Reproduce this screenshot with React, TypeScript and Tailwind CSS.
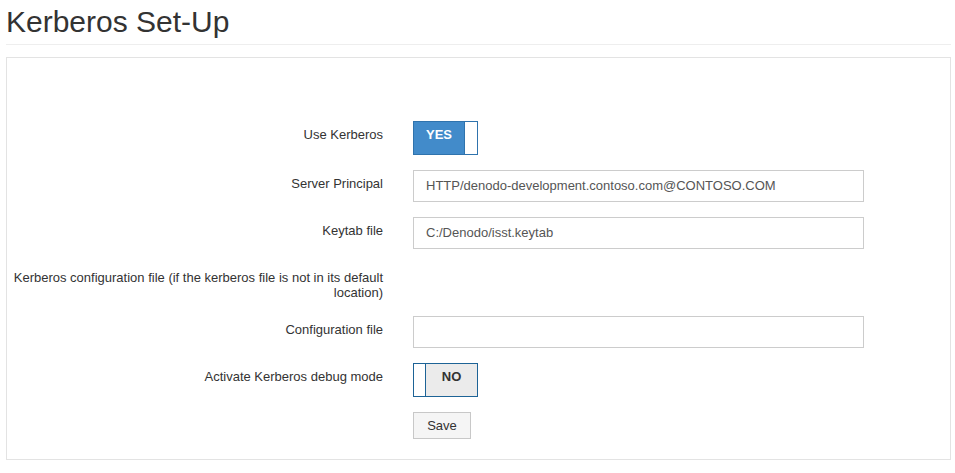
import React from "react";

const font = { fontFamily: '"Liberation Sans", Arial, sans-serif' };

function Label({ children }: { children: React.ReactNode }) {
  return (
    <div className="w-[376px] shrink-0 pt-[6px] text-right text-[13px] leading-[15px] text-[#333]">
      {children}
    </div>
  );
}

function Input({ value }: { value: string }) {
  return (
    <div className="ml-[30px] flex h-[32px] w-[451px] items-center border border-[#ccc] bg-white pl-[12px] text-[13px] text-[#555]">
      {value}
    </div>
  );
}

export default function App() {
  return (
    <div className="min-h-[473px] bg-white" style={font}>
      <div className="ml-[6px] mr-[4px] border-b border-[#eeeeee] pt-[5px] pb-[6px]">
        <h1 className="text-[30px] leading-[33px] text-[#333]">Kerberos Set-Up</h1>
      </div>
      <div className="ml-[6px] mr-[4px] mt-[12px] h-[403px] border border-[#e3e3e3] pt-[63px]">
        <div className="mb-[15px] flex">
          <Label>Use Kerberos</Label>
          <div className="ml-[30px] flex h-[34px] w-[65px] border border-[#2f73ad]">
            <div className="flex w-[50px] items-start justify-center bg-[#428bca] pt-[3px] text-[13px] font-bold text-white">
              YES
            </div>
            <div className="flex-1 border-l border-[#2f73ad] bg-white" />
          </div>
        </div>
        <div className="mb-[15px] flex">
          <Label>Server Principal</Label>
          <Input value="HTTP/denodo-development.contoso.com@CONTOSO.COM" />
        </div>
        <div className="mb-[15px] flex">
          <Label>Keytab file</Label>
          <Input value="C:/Denodo/isst.keytab" />
        </div>
        <div className="mb-[16px] flex">
          <Label>Kerberos configuration file (if the kerberos file is not in its default location)</Label>
        </div>
        <div className="mb-[15px] flex">
          <Label>Configuration file</Label>
          <Input value="" />
        </div>
        <div className="mb-[15px] flex">
          <Label>Activate Kerberos debug mode</Label>
          <div className="ml-[30px] flex h-[34px] w-[65px] border border-[#1d6396]">
            <div className="w-[12px] border-r border-[#1d6396] bg-white" />
            <div className="flex flex-1 items-start justify-center bg-[#ebebeb] pt-[3px] text-[13px] font-bold text-[#333]">
              NO
            </div>
          </div>
        </div>
        <div className="flex">
          <div className="w-[376px] shrink-0" />
          <button className="ml-[30px] h-[27px] w-[58px] border border-[#c8c8c8] bg-[#f5f5f5] text-[13px] text-[#333]">
            Save
          </button>
        </div>
      </div>
    </div>
  );
}
